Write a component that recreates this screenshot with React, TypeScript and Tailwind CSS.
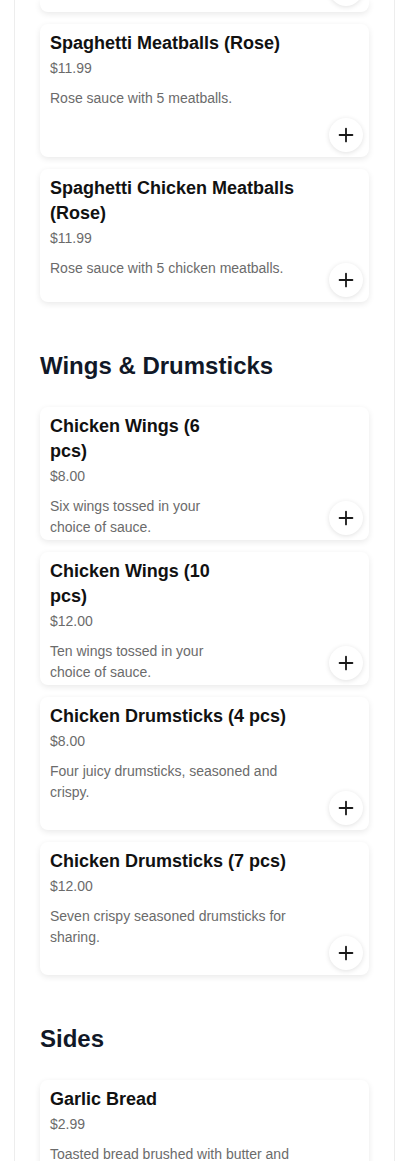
import { Plus } from 'lucide-react'

type Item = {
  name: string
  price: string
  desc: string
  w: string
}

const sections: { title?: string; items: Item[] }[] = [
  {
    items: [
      { name: 'Spaghetti Meatballs (Rose)', price: '$11.99', desc: 'Rose sauce with 5 meatballs.', w: 'w-[260px]' },
      { name: 'Spaghetti Chicken Meatballs (Rose)', price: '$11.99', desc: 'Rose sauce with 5 chicken meatballs.', w: 'w-[260px]' },
    ],
  },
  {
    title: 'Wings & Drumsticks',
    items: [
      { name: 'Chicken Wings (6 pcs)', price: '$8.00', desc: 'Six wings tossed in your choice of sauce.', w: 'w-[170px]' },
      { name: 'Chicken Wings (10 pcs)', price: '$12.00', desc: 'Ten wings tossed in your choice of sauce.', w: 'w-[170px]' },
      { name: 'Chicken Drumsticks (4 pcs)', price: '$8.00', desc: 'Four juicy drumsticks, seasoned and crispy.', w: 'w-[250px]' },
      { name: 'Chicken Drumsticks (7 pcs)', price: '$12.00', desc: 'Seven crispy seasoned drumsticks for sharing.', w: 'w-[250px]' },
    ],
  },
  {
    title: 'Sides',
    items: [
      { name: 'Garlic Bread', price: '$2.99', desc: 'Toasted bread brushed with butter and garlic.', w: 'w-[250px]' },
    ],
  },
]

function AddButton() {
  return (
    <button className="absolute bottom-[5px] right-[6px] flex h-[34px] w-[34px] items-center justify-center rounded-full bg-white text-[#1a1a1a] shadow-[0_1px_5px_rgba(0,0,0,0.12)]">
      <Plus size={22} strokeWidth={2} />
    </button>
  )
}

function MenuCard({ item }: { item: Item }) {
  return (
    <div className="relative h-[133px] rounded-lg bg-white px-2.5 pt-[7px] shadow-[0_2px_6px_rgba(0,0,0,0.09)]">
      <div className={item.w}>
        <h3 className="text-[18px] font-bold leading-[25px] text-[#111]">{item.name}</h3>
        <p className="mt-0.5 text-[14px] leading-[21px] text-[#6b6b6b]">{item.price}</p>
        <p className="mt-[9px] text-[14px] leading-[21px] text-[#6b6b6b]">{item.desc}</p>
      </div>
      <AddButton />
    </div>
  )
}

export default function App() {
  return (
    <div className="h-[1161px] overflow-hidden bg-white" style={{ fontFamily: '"Liberation Sans", Arial, sans-serif' }}>
      <div className="ml-[14px] w-[381px] border-x border-[#ededed] px-[25px] pb-10">
        {/* tail of the card scrolled above the viewport */}
        <div className="relative h-3 rounded-b-lg bg-white shadow-[0_2px_6px_rgba(0,0,0,0.09)]">
          <div className="absolute -top-[28px] right-[6px] h-[34px] w-[34px] rounded-full bg-white shadow-[0_1px_5px_rgba(0,0,0,0.12)]" />
        </div>
        {sections.map((s, i) => (
          <section key={i} className={i === 0 ? 'mt-3' : 'mt-12'}>
            {s.title && (
              <h2 className="mb-[25px] text-[24px] font-bold leading-8 text-[#111827]">{s.title}</h2>
            )}
            <div className="flex flex-col gap-3">
              {s.items.map((it) => (
                <MenuCard key={it.name} item={it} />
              ))}
            </div>
          </section>
        ))}
      </div>
    </div>
  )
}
